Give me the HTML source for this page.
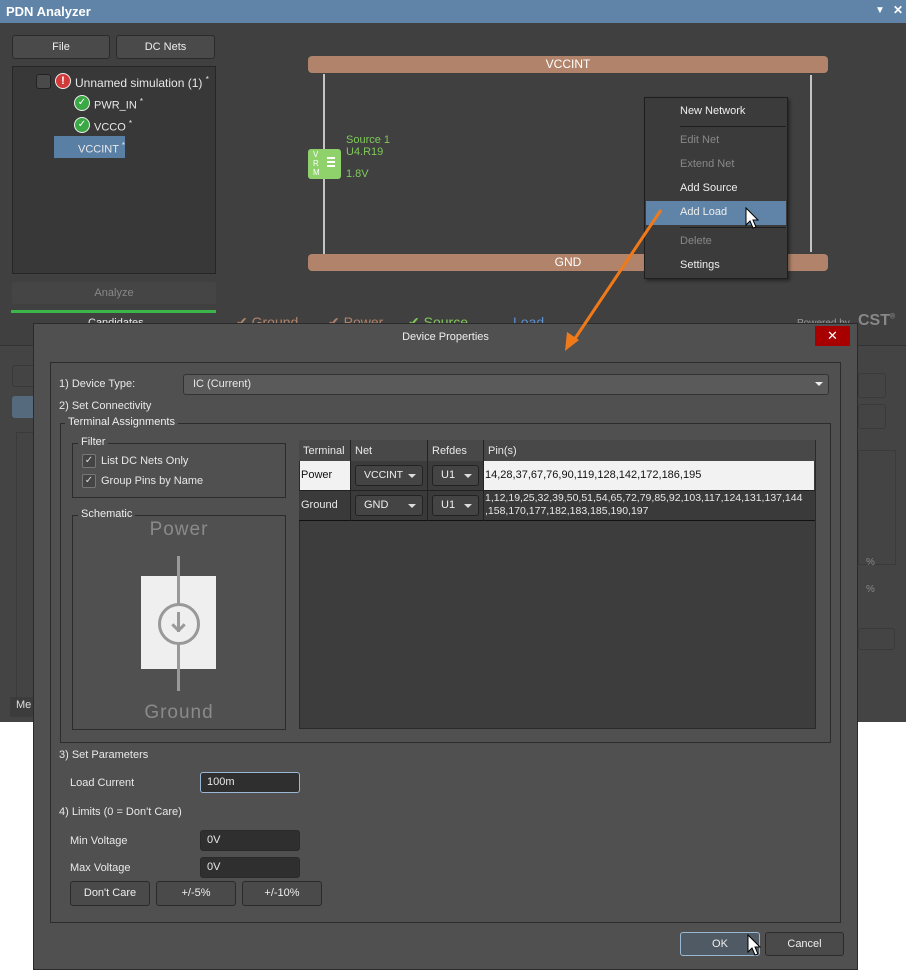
<!DOCTYPE html>
<html><head><meta charset="utf-8"><style>
*{margin:0;padding:0;box-sizing:border-box}
body{width:906px;height:970px;background:#fff;position:relative;overflow:hidden;font-family:"Liberation Sans",sans-serif;font-size:11px;color:#e8e8e8}
.a{position:absolute}
.btn{position:absolute;background:#4a4a4a;border:1px solid #2a2a2a;border-radius:3px;text-align:center;color:#eee;font-size:11px}
.bar{position:absolute;background:#b0836a;border-radius:4px;color:#fff;text-align:center;font-size:12px;line-height:17px}
.mi{position:absolute;left:35px;font-size:11px}
.grp{position:absolute;border:1px solid #2c2c2c}
.lg{position:absolute;background:#505050;padding:0 3px;font-size:11px;color:#eee}
.inp{position:absolute;background:#2f2f2f;border:1px solid #2a2a2a;border-radius:3px;padding-left:6px;line-height:18px;font-size:11px}
.cb{position:absolute;width:14px;height:14px;border:1px solid #777;border-radius:2px;background:#444;font-size:10px;line-height:12px;text-align:center;color:#ddd}
.dd{position:absolute;background:#444;border:1px solid #222;border-radius:3px;color:#eee;font-size:11px;line-height:19px;padding-left:8px}
.dd:after{content:"";position:absolute;right:6px;top:8px;border:4px solid transparent;border-top:4px solid #ddd;border-bottom:0}
</style></head><body>
<div class="a" style="left:0;top:0;width:906px;height:722px;background:#404040"></div>
<div class="a" style="left:0;top:0;width:906px;height:23px;background:#5f84a8"></div>
<div class="a" style="left:6px;top:4px;font-size:13px;font-weight:bold;color:#fff">PDN Analyzer</div>
<div class="a" style="left:875px;top:5px;font-size:10px;color:#fff">▼</div>
<div class="a" style="left:893px;top:3px;font-size:12px;color:#fff;font-weight:bold">✕</div>

<div class="btn" style="left:12px;top:35px;width:98px;height:24px;line-height:22px">File</div>
<div class="btn" style="left:116px;top:35px;width:99px;height:24px;line-height:22px">DC Nets</div>
<div class="a" style="left:12px;top:66px;width:204px;height:208px;background:#383838;border:1px solid #262626"></div>
<div class="a" style="left:36px;top:74px;width:15px;height:15px;background:#4a4a4a;border:1px solid #222;border-radius:3px"></div>
<div class="a" style="left:55px;top:73px;width:16px;height:16px;border-radius:50%;background:#d23a3a;border:1px solid #eee;color:#fff;font-size:11px;font-weight:bold;text-align:center;line-height:14px">!</div>
<div class="a" style="left:75px;top:75px;font-size:12px">Unnamed simulation (1) <sup style="font-size:8px">*</sup></div>
<div class="a" style="left:74px;top:95px;width:16px;height:16px;border-radius:50%;background:#3aa845;border:1px solid #eee;color:#fff;font-size:10px;text-align:center;line-height:14px">✓</div>
<div class="a" style="left:94px;top:97px;font-size:11px">PWR_IN <sup style="font-size:8px">*</sup></div>
<div class="a" style="left:74px;top:117px;width:16px;height:16px;border-radius:50%;background:#3aa845;border:1px solid #eee;color:#fff;font-size:10px;text-align:center;line-height:14px">✓</div>
<div class="a" style="left:94px;top:119px;font-size:11px">VCCO <sup style="font-size:8px">*</sup></div>
<div class="a" style="left:54px;top:136px;width:71px;height:22px;background:#5a7fa5"></div>
<div class="a" style="left:78px;top:141px;font-size:11px">VCCINT <sup style="font-size:8px">*</sup></div>
<div class="a" style="left:12px;top:282px;width:204px;height:22px;background:#454545;border-radius:2px;color:#888;text-align:center;line-height:22px">Analyze</div>
<div class="a" style="left:11px;top:310px;width:205px;height:3px;background:#3bb54a"></div>

<div class="bar" style="left:308px;top:56px;width:520px;height:17px">VCCINT</div>
<div class="bar" style="left:308px;top:254px;width:520px;height:17px">GND</div>
<div class="a" style="left:323px;top:74px;width:2px;height:180px;background:#c4c4c4"></div>
<div class="a" style="left:810px;top:75px;width:2px;height:177px;background:#c4c4c4"></div>
<div class="a" style="left:308px;top:149px;width:33px;height:30px;background:#8fd16a;border-radius:3px"></div>
<div class="a" style="left:313px;top:150px;font-size:8px;line-height:9px;color:#fff;width:8px">V<br>R<br>M</div>
<div class="a" style="left:327px;top:157px;width:8px;height:2px;background:#fff;box-shadow:0 4px 0 #fff,0 8px 0 #fff"></div>
<div class="a" style="left:346px;top:134px;color:#7fc95a;font-size:11px;line-height:12px">Source 1<br>U4.R19</div>
<div class="a" style="left:346px;top:168px;color:#7fc95a;font-size:11px">1.8V</div>

<div class="a" style="left:236px;top:314px;font-size:14px;color:#b0836a">✔ Ground</div>
<div class="a" style="left:328px;top:314px;font-size:14px;color:#b0836a">✔ Power</div>
<div class="a" style="left:408px;top:314px;font-size:14px;color:#7fc95a">✔ Source</div>
<div class="a" style="left:513px;top:314px;font-size:14px;color:#5a8fd0">Load</div>
<div class="a" style="left:797px;top:318px;font-size:10px;color:#999">Powered by</div>
<div class="a" style="left:858px;top:312px;font-size:16px;font-weight:bold;color:#888">CST<sup style="font-size:7px">®</sup></div>
<div class="a" style="left:88px;top:317px;font-size:11px">Candidates</div>

<div class="a" style="left:0;top:345px;width:906px;height:377px;background:#444;border-top:1px solid #333"></div>
<div class="a" style="left:12px;top:365px;width:30px;height:22px;border:1px solid #383838;border-radius:3px"></div>
<div class="a" style="left:12px;top:396px;width:30px;height:22px;background:#566a7e;border-radius:3px"></div>
<div class="a" style="left:16px;top:432px;width:20px;height:268px;border:1px solid #3a3a3a"></div>
<div class="a" style="left:10px;top:697px;width:25px;height:20px;background:#3c3c3c;color:#ddd;font-size:11px;padding:2px 6px">Me</div>
<div class="a" style="left:858px;top:373px;width:28px;height:25px;border:1px solid #3a3a3a;border-radius:3px"></div>
<div class="a" style="left:858px;top:404px;width:28px;height:25px;border:1px solid #3a3a3a;border-radius:3px"></div>
<div class="a" style="left:858px;top:450px;width:38px;height:115px;border:1px solid #3a3a3a"></div>
<div class="a" style="left:866px;top:557px;font-size:10px;color:#888">%</div>
<div class="a" style="left:866px;top:584px;font-size:10px;color:#888">%</div>
<div class="a" style="left:858px;top:628px;width:37px;height:22px;border:1px solid #3a3a3a;border-radius:3px"></div>

<div class="a" style="left:644px;top:97px;width:144px;height:182px;background:#3b3b3b;border:1px solid #1e1e1e;box-shadow:2px 2px 3px rgba(0,0,0,.4)">
<div class="mi" style="top:7px;color:#eee">New Network</div>
<div class="a" style="left:35px;top:28px;width:106px;height:1px;background:#1e1e1e"></div>
<div class="mi" style="top:36px;color:#888">Edit Net</div>
<div class="mi" style="top:60px;color:#888">Extend Net</div>
<div class="mi" style="top:84px;color:#eee">Add Source</div>
<div class="a" style="left:1px;top:103px;width:140px;height:24px;background:#5f84a8"></div>
<div class="mi" style="top:108px;color:#eee">Add Load</div>
<div class="a" style="left:35px;top:129px;width:106px;height:1px;background:#1e1e1e"></div>
<div class="mi" style="top:137px;color:#888">Delete</div>
<div class="mi" style="top:161px;color:#eee">Settings</div>
</div>

<div class="a" style="left:33px;top:323px;width:825px;height:647px;background:#505050;border:1px solid #2a2a2a"></div>
<div class="a" style="left:33px;top:331px;width:825px;text-align:center;font-size:11px;color:#eee">Device Properties</div>
<div class="a" style="left:815px;top:326px;width:35px;height:20px;background:#a80000;color:#fff;text-align:center;font-size:13px;line-height:20px">✕</div>
<div class="grp" style="left:50px;top:362px;width:791px;height:561px"></div>
<div class="a" style="left:59px;top:378px">1) Device Type:</div>
<div class="a" style="left:183px;top:374px;width:646px;height:21px;background:#5a5a5a;border:1px solid #333;border-radius:3px;padding-left:9px;line-height:19px">IC (Current)</div>
<div class="a" style="left:815px;top:382px;border:4px solid transparent;border-top:4px solid #eee"></div>
<div class="a" style="left:59px;top:400px">2) Set Connectivity</div>
<div class="grp" style="left:60px;top:423px;width:771px;height:320px"></div>
<div class="lg" style="left:65px;top:416px">Terminal Assignments</div>
<div class="grp" style="left:72px;top:443px;width:214px;height:55px"></div>
<div class="lg" style="left:78px;top:436px">Filter</div>
<div class="cb" style="left:82px;top:454px">✓</div>
<div class="a" style="left:101px;top:455px">List DC Nets Only</div>
<div class="cb" style="left:82px;top:474px">✓</div>
<div class="a" style="left:101px;top:475px">Group Pins by Name</div>
<div class="grp" style="left:72px;top:515px;width:214px;height:215px"></div>
<div class="lg" style="left:78px;top:508px">Schematic</div>
<div class="a" style="left:72px;top:519px;width:214px;text-align:center;font-size:19px;color:#8a8a8a;letter-spacing:1px">Power</div>
<div class="a" style="left:141px;top:576px;width:75px;height:93px;background:#efefef"></div>
<div class="a" style="left:177px;top:556px;width:3px;height:135px;background:#999"></div>
<div class="a" style="left:158px;top:603px;width:42px;height:42px;border-radius:50%;border:3px solid #999;background:#efefef"></div>
<div class="a" style="left:177px;top:612px;width:3px;height:20px;background:#999"></div>
<div class="a" style="left:171px;top:626px;width:9px;height:3px;background:#999;transform:rotate(45deg)"></div>
<div class="a" style="left:177px;top:626px;width:9px;height:3px;background:#999;transform:rotate(-45deg)"></div>
<div class="a" style="left:72px;top:702px;width:214px;text-align:center;font-size:19px;color:#8a8a8a;letter-spacing:1px">Ground</div>

<div class="a" style="left:299px;top:440px;width:517px;height:289px;background:#3d3d3d;border:1px solid #2a2a2a"></div>
<div class="a" style="left:299px;top:440px;width:516px;height:21px;background:#484848"></div>
<div class="a" style="left:303px;top:445px">Terminal</div>
<div class="a" style="left:355px;top:445px">Net</div>
<div class="a" style="left:432px;top:445px">Refdes</div>
<div class="a" style="left:488px;top:445px">Pin(s)</div>
<div class="a" style="left:300px;top:461px;width:50px;height:29px;background:#f2f2f2;color:#111;padding:8px 1px">Power</div>
<div class="a" style="left:350px;top:461px;width:77px;height:29px;background:#3c3c3c"></div>
<div class="a" style="left:427px;top:461px;width:56px;height:29px;background:#3c3c3c"></div>
<div class="a" style="left:483px;top:461px;width:331px;height:29px;background:#f2f2f2;color:#111;padding:8px 2px">14,28,37,67,76,90,119,128,142,172,186,195</div>
<div class="a" style="left:299px;top:490px;width:516px;height:31px;background:#3a3a3a;border-top:1px solid #222;border-bottom:1px solid #111"></div>
<div class="a" style="left:301px;top:499px">Ground</div>
<div class="a" style="left:485px;top:492px;line-height:13px;font-size:10.5px">1,12,19,25,32,39,50,51,54,65,72,79,85,92,103,117,124,131,137,144<br>,158,170,177,182,183,185,190,197</div>
<div class="a" style="left:350px;top:440px;width:1px;height:81px;background:#222"></div>
<div class="a" style="left:427px;top:440px;width:1px;height:81px;background:#222"></div>
<div class="a" style="left:483px;top:440px;width:1px;height:81px;background:#222"></div>
<div class="dd" style="left:355px;top:465px;width:68px;height:21px;font-size:10.5px">VCCINT</div>
<div class="dd" style="left:432px;top:465px;width:47px;height:21px">U1</div>
<div class="dd" style="left:355px;top:495px;width:68px;height:21px">GND</div>
<div class="dd" style="left:432px;top:495px;width:47px;height:21px">U1</div>

<div class="a" style="left:59px;top:749px">3) Set Parameters</div>
<div class="a" style="left:70px;top:777px">Load Current</div>
<div class="inp" style="left:200px;top:772px;width:100px;height:21px;border-color:#9ab8d6">100m</div>
<div class="a" style="left:59px;top:806px">4) Limits (0 = Don't Care)</div>
<div class="a" style="left:70px;top:835px">Min Voltage</div>
<div class="inp" style="left:200px;top:830px;width:100px;height:21px">0V</div>
<div class="a" style="left:70px;top:862px">Max Voltage</div>
<div class="inp" style="left:200px;top:857px;width:100px;height:21px">0V</div>
<div class="btn" style="left:70px;top:881px;width:80px;height:25px;line-height:23px">Don't Care</div>
<div class="btn" style="left:156px;top:881px;width:80px;height:25px;line-height:23px">+/-5%</div>
<div class="btn" style="left:242px;top:881px;width:80px;height:25px;line-height:23px">+/-10%</div>
<div class="btn" style="left:680px;top:932px;width:80px;height:24px;line-height:22px;border-color:#9ab8d6;background:#505a64">OK</div>
<div class="btn" style="left:765px;top:932px;width:79px;height:24px;line-height:22px">Cancel</div>

<svg class="a" style="left:0;top:0" width="906" height="970">
<line x1="661" y1="210" x2="572" y2="343" stroke="#f07a1a" stroke-width="3"/>
<polygon points="565,351 567,332 579,340" fill="#f07a1a"/>
<path d="M746 208 L746 225 L750 221 L753 228 L756 227 L753 220 L758 220 Z" fill="#fff" stroke="#000" stroke-width="1"/>
<path d="M748 935 L748 952 L752 948 L755 955 L758 954 L755 947 L760 947 Z" fill="#fff" stroke="#000" stroke-width="1"/>
</svg>
</body></html>
